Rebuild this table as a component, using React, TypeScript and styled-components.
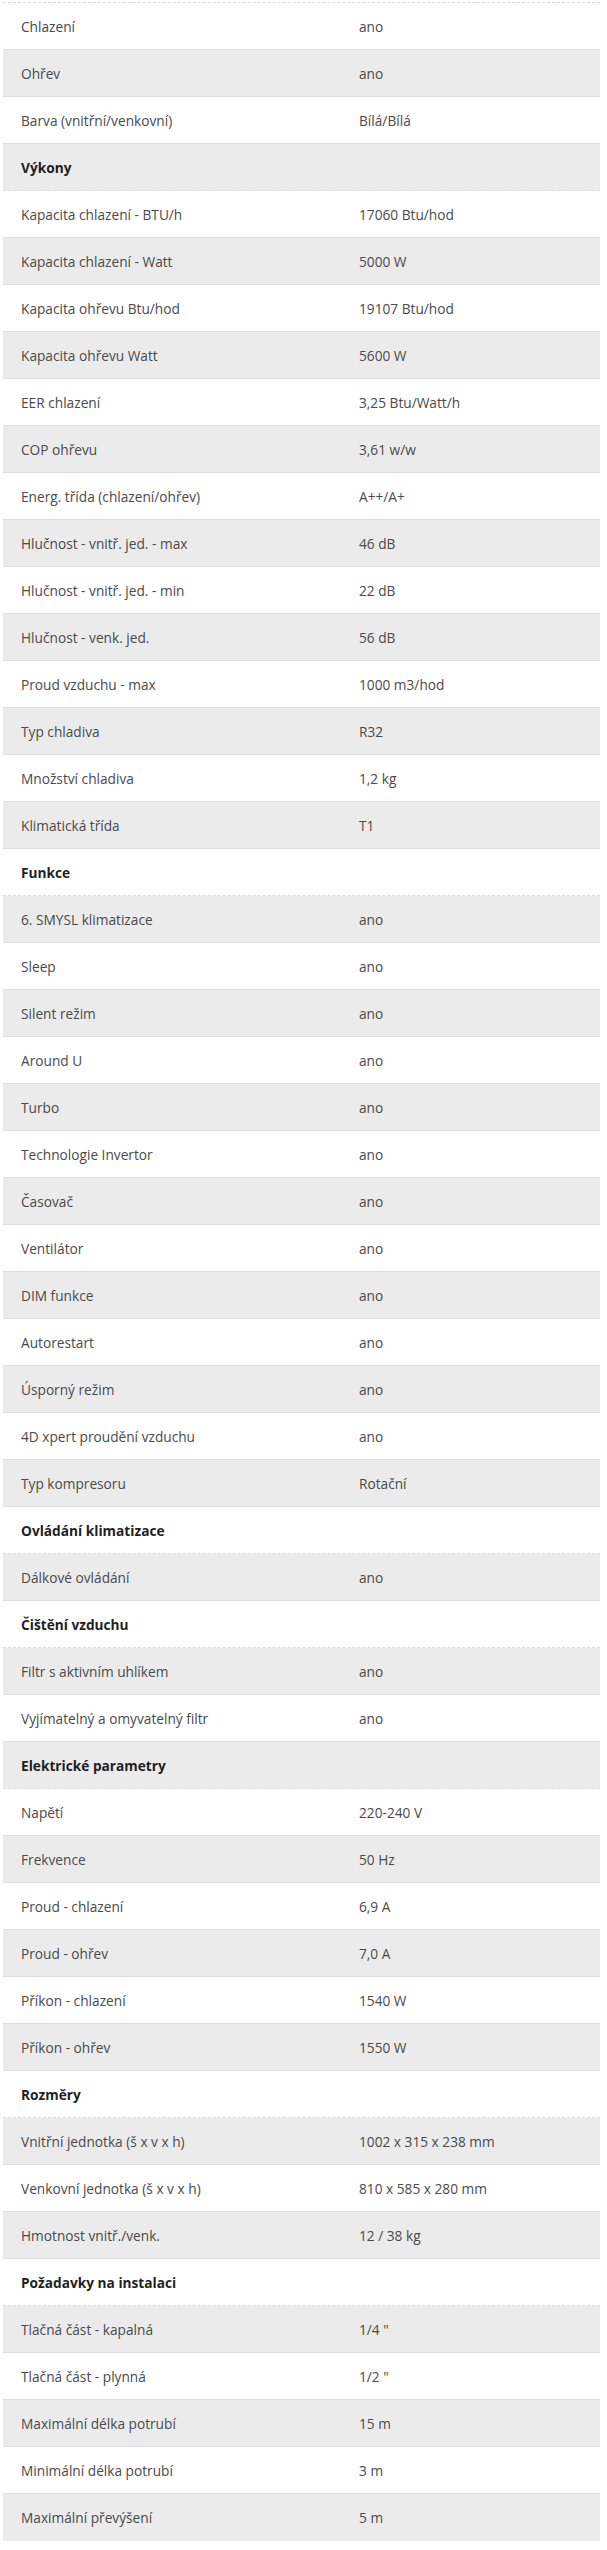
import React from "react";
import styled, { createGlobalStyle } from "styled-components";

const GlobalStyle = createGlobalStyle`
  html, body { margin: 0; padding: 0; background: #ffffff; }
  body { font-family: "Open Sans", "Liberation Sans", Arial, sans-serif; }
`;

const Wrapper = styled.div`
  padding: 2px 7px 0 3px;
`;

const Table = styled.div`
  display: flex;
  flex-direction: column;
  border-top: 1px dashed #d8d8d8;
  font-size: 13.7px;
  color: #4a4a4a;
`;

const Row = styled.div<{ $header?: boolean; $last?: boolean }>`
  display: grid;
  grid-template-columns: 338px 1fr;
  align-items: center;
  height: 46px;
  border-bottom: 1px ${(p) => (p.$header ? "dashed" : "solid")} ${(p) => (p.$last ? "transparent" : "#dcdcdc")};
  &:nth-child(even) { background: #ebebeb; }
`;

const Label = styled.div<{ $header?: boolean }>`
  padding-left: 18px;
  font-weight: ${(p) => (p.$header ? 700 : 400)};
  color: ${(p) => (p.$header ? "#1f1f1f" : "#4a4a4a")};
`;

const Value = styled.div`
  padding-left: 18px;
`;

type Item = [string, string?];

const rows: Item[] = [
  ["Chlazení", "ano"],
  ["Ohřev", "ano"],
  ["Barva (vnitřní/venkovní)", "Bílá/Bílá"],
  ["Výkony"],
  ["Kapacita chlazení - BTU/h", "17060 Btu/hod"],
  ["Kapacita chlazení - Watt", "5000 W"],
  ["Kapacita ohřevu Btu/hod", "19107 Btu/hod"],
  ["Kapacita ohřevu Watt", "5600 W"],
  ["EER chlazení", "3,25 Btu/Watt/h"],
  ["COP ohřevu", "3,61 w/w"],
  ["Energ. třída (chlazení/ohřev)", "A++/A+"],
  ["Hlučnost - vnitř. jed. - max", "46 dB"],
  ["Hlučnost - vnitř. jed. - min", "22 dB"],
  ["Hlučnost - venk. jed.", "56 dB"],
  ["Proud vzduchu - max", "1000 m3/hod"],
  ["Typ chladiva", "R32"],
  ["Množství chladiva", "1,2 kg"],
  ["Klimatická třída", "T1"],
  ["Funkce"],
  ["6. SMYSL klimatizace", "ano"],
  ["Sleep", "ano"],
  ["Silent režim", "ano"],
  ["Around U", "ano"],
  ["Turbo", "ano"],
  ["Technologie Invertor", "ano"],
  ["Časovač", "ano"],
  ["Ventilátor", "ano"],
  ["DIM funkce", "ano"],
  ["Autorestart", "ano"],
  ["Úsporný režim", "ano"],
  ["4D xpert proudění vzduchu", "ano"],
  ["Typ kompresoru", "Rotační"],
  ["Ovládání klimatizace"],
  ["Dálkové ovládání", "ano"],
  ["Čištění vzduchu"],
  ["Filtr s aktivním uhlíkem", "ano"],
  ["Vyjímatelný a omyvatelný filtr", "ano"],
  ["Elektrické parametry"],
  ["Napětí", "220-240 V"],
  ["Frekvence", "50 Hz"],
  ["Proud - chlazení", "6,9 A"],
  ["Proud - ohřev", "7,0 A"],
  ["Příkon - chlazení", "1540 W"],
  ["Příkon - ohřev", "1550 W"],
  ["Rozměry"],
  ["Vnitřní jednotka (š x v x h)", "1002 x 315 x 238 mm"],
  ["Venkovní jednotka (š x v x h)", "810 x 585 x 280 mm"],
  ["Hmotnost vnitř./venk.", "12 / 38 kg"],
  ["Požadavky na instalaci"],
  ["Tlačná část - kapalná", "1/4 \""],
  ["Tlačná část - plynná", "1/2 \""],
  ["Maximální délka potrubí", "15 m"],
  ["Minimální délka potrubí", "3 m"],
  ["Maximální převýšení", "5 m"],
];

export default function App() {
  return (
    <>
      <GlobalStyle />
      <Wrapper>
        <Table>
          {rows.map(([label, value], i) => {
            const header = value === undefined;
            return (
              <Row key={i} $header={header} $last={i === rows.length - 1}>
                <Label $header={header}>{label}</Label>
                <Value>{value ?? ""}</Value>
              </Row>
            );
          })}
        </Table>
      </Wrapper>
    </>
  );
}
